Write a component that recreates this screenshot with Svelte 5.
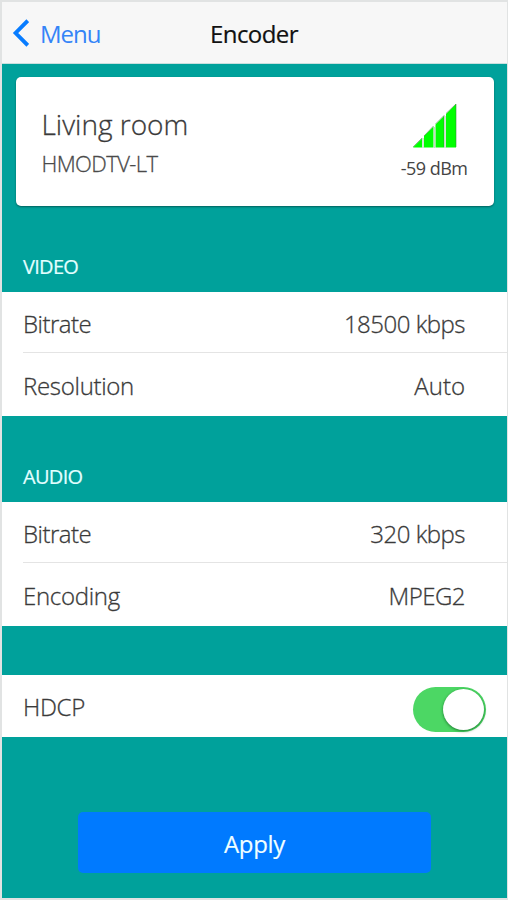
<script>
  const groups = [
    {
      title: 'VIDEO',
      rows: [
        { label: 'Bitrate', value: '18500 kbps' },
        { label: 'Resolution', value: 'Auto' }
      ]
    },
    {
      title: 'AUDIO',
      rows: [
        { label: 'Bitrate', value: '320 kbps' },
        { label: 'Encoding', value: 'MPEG2' }
      ]
    }
  ];
  let hdcp = $state(true);
</script>

<main>
  <header>
    <button class="back" aria-label="Back to menu">
      <svg width="17" height="28" viewBox="0 0 17 28"><path d="M15.8 1.7 L3.6 14 L15.8 26.3" fill="none" stroke="#087cff" stroke-width="3.9" /></svg>
      <span>Menu</span>
    </button>
    <h1>Encoder</h1>
    <div class="side"></div>
  </header>

  <section class="card">
    <div class="device">
      <h2>Living room</h2>
      <p>HMODTV-LT</p>
    </div>
    <div class="signal">
      <svg width="46" height="45" viewBox="0 0 46 45">
        <path d="M1 43.5 L10 34.5 V43.5 Z M12 43.5 V32 L21.5 22.5 V43.5 Z M23.5 43.5 V20.5 L32 12 V43.5 Z M34 43.5 V10 L44 0 V43.5 Z" fill="#00ff00" />
        <path d="M1 43 L10 34 M12 32 L21.5 22 M23.5 20 L32 11.5 V43 M34 9.5 L44 0 V43" fill="none" stroke="#357f35" stroke-opacity=".6" stroke-width=".9" />
        <path d="M11 34 V44 M22.5 23 V44 M33 12 V44" fill="none" stroke="#c5d5c5" stroke-width="1.4" />
      </svg>
      <span>-59 dBm</span>
    </div>
  </section>

  {#each groups as group}
    <section class="group">
      <h3>{group.title}</h3>
      <div class="list">
        {#each group.rows as row}
          <div class="row">
            <span class:tight={row.label === 'Bitrate'}>{row.label}</span>
            <span class="value" class:loose={row.value === 'Auto'}>{row.value}</span>
          </div>
        {/each}
      </div>
    </section>
  {/each}

  <section class="switch-row">
    <span>HDCP</span>
    <button class="switch" class:on={hdcp} role="switch" aria-checked={hdcp} aria-label="HDCP" onclick={() => (hdcp = !hdcp)}>
      <i></i>
    </button>
  </section>

  <button class="apply">Apply</button>
</main>

<style>
  :global(body) { margin: 0; }
  main {
    box-sizing: border-box;
    width: 508px;
    height: 900px;
    border: solid #e1e3e3;
    border-width: 2px 1px 2px 2px;
    background: #00a19b;
    display: flex;
    flex-direction: column;
    overflow: hidden;
    font-family: "Open Sans", "Noto Sans", sans-serif;
    font-weight: 300;
    font-size: 24px;
    line-height: 32px;
    letter-spacing: -.3px;
    color: #3a3a3a;
    -webkit-text-stroke: .3px currentColor;
  }
  button { font: inherit; letter-spacing: inherit; border: 0; padding: 0; margin: 0; background: none; }
  h1, h2, h3, p { margin: 0; font-weight: inherit; font-size: inherit; }
  span, h1, h2, h3, p { white-space: nowrap; }
  header {
    height: 62px;
    flex: none;
    background: #f7f7f7;
    border-bottom: 1px solid #c9dfde;
    box-sizing: border-box;
    display: flex;
    align-items: center;
  }
  .back {
    width: 160px;
    display: flex;
    align-items: center;
    padding: 1px 0 0 10px;
    gap: 11px;
    color: #3484f7;
    font-weight: 400;
    letter-spacing: -1px;
    -webkit-text-stroke: 0;
    box-sizing: border-box;
  }
  .back span { padding-top: 2px; }
  .back svg { flex: none; margin-top: -1px; }
  h1 { flex: 1; text-align: center; font-weight: 400; color: #111; padding-top: 3px; font-size: 24px; letter-spacing: -.6px; -webkit-text-stroke: .2px currentColor; }
  .side { width: 161px; }
  .card {
    flex: none;
    box-sizing: border-box;
    height: 128.5px;
    margin: 13px 13.5px 0 13.5px;
    padding: 0 26px;
    background: #fff;
    border-radius: 5px;
    box-shadow: 0 1px 2px rgba(0, 0, 0, .4);
    display: flex;
    justify-content: space-between;
  }
  .device { padding-top: 28px; }
  .device h2 { font-size: 28px; line-height: 38px; letter-spacing: 0; }
  .device p { font-size: 22px; line-height: 30px; margin-top: 5px; letter-spacing: -.6px; color: #4a4a4a; }
  .signal { display: flex; flex-direction: column; align-items: flex-end; padding-top: 27px; }
  .signal svg { margin-right: 10px; }
  .signal span { font-size: 18px; line-height: 24px; margin-top: 7px; font-weight: 400; letter-spacing: -.5px; color: #444; -webkit-text-stroke: 0; }
  .group { flex: none; padding-top: 46.5px; }
  h3 { color: #e3ffff; font-weight: 400; font-size: 20px; line-height: 30px; padding: 0 0 10px 21px; letter-spacing: -.7px; -webkit-text-stroke: .2px currentColor; }
  .list { background: #fff; height: 123.5px; display: flex; flex-direction: column; }
  .row {
    box-sizing: border-box;
    height: 60px;
    display: flex;
    justify-content: space-between;
    align-items: center;
    margin-left: 21px;
    padding-right: 42px;
    padding-top: 3px;
  }
  .row + .row { height: 63px; padding-top: 4px; border-top: 1px solid #e4e4e4; }
  .tight { letter-spacing: -.5px; }
  .value { letter-spacing: -.5px; }
  .value.loose { letter-spacing: 0; }
  .switch-row {
    flex: none;
    height: 62px;
    margin-top: 49px;
    padding: 0 21px;
    background: #fff;
    display: flex;
    align-items: center;
    justify-content: space-between;
  }
  .switch-row span { padding-top: 2px; }
  .switch { width: 73px; height: 45px; border-radius: 23px; background: #ddd; padding: 2px; display: flex; margin-top: 8px; }
  .switch.on { background: #4cd764; justify-content: flex-end; }
  .switch i { width: 41px; height: 41px; border-radius: 50%; background: #fff; box-shadow: 0 1px 3px rgba(0, 70, 20, .65); }
  .apply {
    flex: none;
    width: 353px;
    height: 61px;
    margin: 75px 0 0 76px;
    border-radius: 5px;
    background: #007aff;
    color: #f0ffff;
    font-weight: 400;
    padding-top: 3px;
    -webkit-text-stroke: .15px currentColor;
  }
</style>
